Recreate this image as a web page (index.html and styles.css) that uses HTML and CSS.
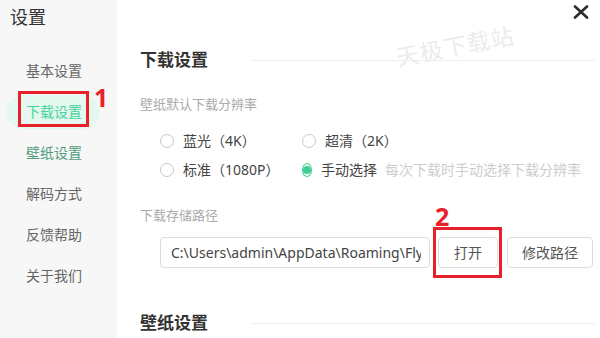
FILE: index.html
```html
<!DOCTYPE html>
<html lang="zh-CN">
<head>
    <meta charset="UTF-8">
    <title>设置</title>
    <link rel="stylesheet" href="styles.css">
</head>
<body>
    <div class="window">
        <div class="sidebar">
            <div class="side-title">设置</div>
            <ul class="menu">
                <li>基本设置</li>
                <li class="active">
                    下载设置
                    <span class="mark mark-one"></span>
                    <span class="mark-num num-one">1</span>
                </li>
                <li class="hover">壁纸设置</li>
                <li>解码方式</li>
                <li>反馈帮助</li>
                <li>关于我们</li>
            </ul>
        </div>
        <div class="main">
            <div class="topbar">
                <svg class="close" width="16" height="14" viewBox="0 0 16 14">
                    <path d="M2 1.5 L14 12.5 M14 1.5 L2 12.5" stroke="#2b2b2b" stroke-width="2.6" stroke-linecap="round"/>
                </svg>
            </div>
            <div class="watermark">天极下载站</div>

            <div class="section-title">下载设置</div>
            <div class="label">壁纸默认下载分辨率</div>
            <div class="radios">
                <div class="radio-row">
                    <label class="radio"><span class="dot"></span>蓝光（4K）</label>
                    <label class="radio"><span class="dot"></span>超清（2K）</label>
                </div>
                <div class="radio-row">
                    <label class="radio"><span class="dot"></span>标准（1080P）</label>
                    <label class="radio checked"><span class="dot"></span>手动选择<span class="hint">每次下载时手动选择下载分辨率</span></label>
                </div>
            </div>

            <div class="label path-label">下载存储路径</div>
            <div class="path-row">
                <input class="path" type="text" readonly value="C:\Users\admin\AppData\Roaming\FlyWallpaper\download">
                <div class="btn btn-open">
                    打开
                    <span class="mark mark-two"></span>
                    <span class="mark-num num-two">2</span>
                </div>
                <div class="btn">修改路径</div>
            </div>

            <div class="section-title second">壁纸设置</div>
        </div>
    </div>
</body>
</html>
```

FILE: styles.css
```css
* {
    padding: 0px;
    margin: 0px;
    list-style: none;
    box-sizing: border-box;
}
body {
    width: 600px;
    height: 338px;
    overflow: hidden;
    font-family: "Noto Sans", "Noto Sans CJK SC", sans-serif;
    color: #444;
    background: #fff;
}
.window {
    display: flex;
    height: 338px;
}
.sidebar {
    width: 117px;
    flex-shrink: 0;
    background-color: #f7f7f7;
    padding-top: 5px;
}
.side-title {
    padding-left: 10px;
    font-size: 18px;
    line-height: 24px;
    color: #333;
}
.menu {
    margin-top: 25px;
    display: flex;
    flex-direction: column;
    gap: 7px;
}
.menu li {
    position: relative;
    height: 34px;
    margin: 0px 17px 0px 6px;
    padding-left: 20px;
    font-size: 14px;
    line-height: 34px;
    color: #666;
    border-radius: 17px;
}
.menu .active {
    background-color: #e5f8ef;
    color: #46d39b;
}
.menu .hover {
    color: #4f9d7c;
}
.mark {
    position: absolute;
    border: 3px solid #e8202a;
}
.mark-num {
    position: absolute;
    font-family: "Noto Sans", sans-serif;
    font-size: 25px;
    font-weight: bold;
    line-height: 25px;
    color: #e8202a;
}
.mark-one {
    left: 12px;
    top: -4px;
    width: 71px;
    height: 36px;
}
.num-one {
    left: 88px;
    top: -10px;
}
.main {
    position: relative;
    flex: 1;
    padding: 0px 5px 0px 23px;
}
.topbar {
    display: flex;
    justify-content: flex-end;
    height: 28px;
    padding: 5px 6px 0px 0px;
}
.watermark {
    position: absolute;
    left: 278px;
    top: 28px;
    font-size: 23px;
    color: #ececec;
    letter-spacing: 1px;
    transform: rotate(-11deg);
}
.section-title {
    display: flex;
    align-items: center;
    margin-top: 20px;
    font-size: 17px;
    font-weight: bold;
    line-height: 24px;
    color: #333;
}
.section-title::after {
    content: "";
    flex: 1;
    height: 1px;
    margin-left: 44px;
    background-color: #eee;
}
.section-title.second {
    margin-top: 43px;
}
.label {
    margin-top: 22px;
    font-size: 13px;
    line-height: 20px;
    color: #aaa;
}
.radios {
    margin-top: 17px;
    padding-left: 20px;
    display: flex;
    flex-direction: column;
    gap: 9px;
}
.radio-row {
    display: flex;
}
.radio {
    display: flex;
    align-items: center;
    width: 142px;
    font-size: 14px;
    line-height: 20px;
    color: #444;
    white-space: nowrap;
}
.dot {
    width: 14px;
    height: 14px;
    margin-right: 9px;
    border: 1px solid #c8c8c8;
    border-radius: 50%;
    display: flex;
    align-items: center;
    justify-content: center;
}
.checked .dot {
    border-color: #3fcf90;
}
.checked .dot::after {
    content: "";
    width: 8px;
    height: 8px;
    border-radius: 50%;
    background-color: #3fcf90;
}
.hint {
    margin-left: 8px;
    color: #cdcdcd;
}
.path-label {
    margin-top: 25px;
}
.path-row {
    display: flex;
    margin-top: 12px;
    padding-left: 20px;
}
.path {
    width: 270px;
    height: 31px;
    padding: 0px 8px 0px 10px;
    border: 1px solid #ddd;
    border-radius: 4px;
    font-family: "Noto Sans", sans-serif;
    font-size: 14px;
    color: #444;
    outline: none;
}
.btn {
    position: relative;
    height: 31px;
    margin-left: 8px;
    border: 1px solid #ddd;
    border-radius: 4px;
    font-size: 14px;
    line-height: 29px;
    color: #555;
    text-align: center;
    white-space: nowrap;
}
.btn-open {
    width: 60px;
}
.btn-open + .btn {
    width: 86px;
    margin-left: 9px;
}
.mark-two {
    left: -6px;
    top: -11px;
    width: 69px;
    height: 51px;
}
.num-two {
    left: -4px;
    top: -34px;
}
```
